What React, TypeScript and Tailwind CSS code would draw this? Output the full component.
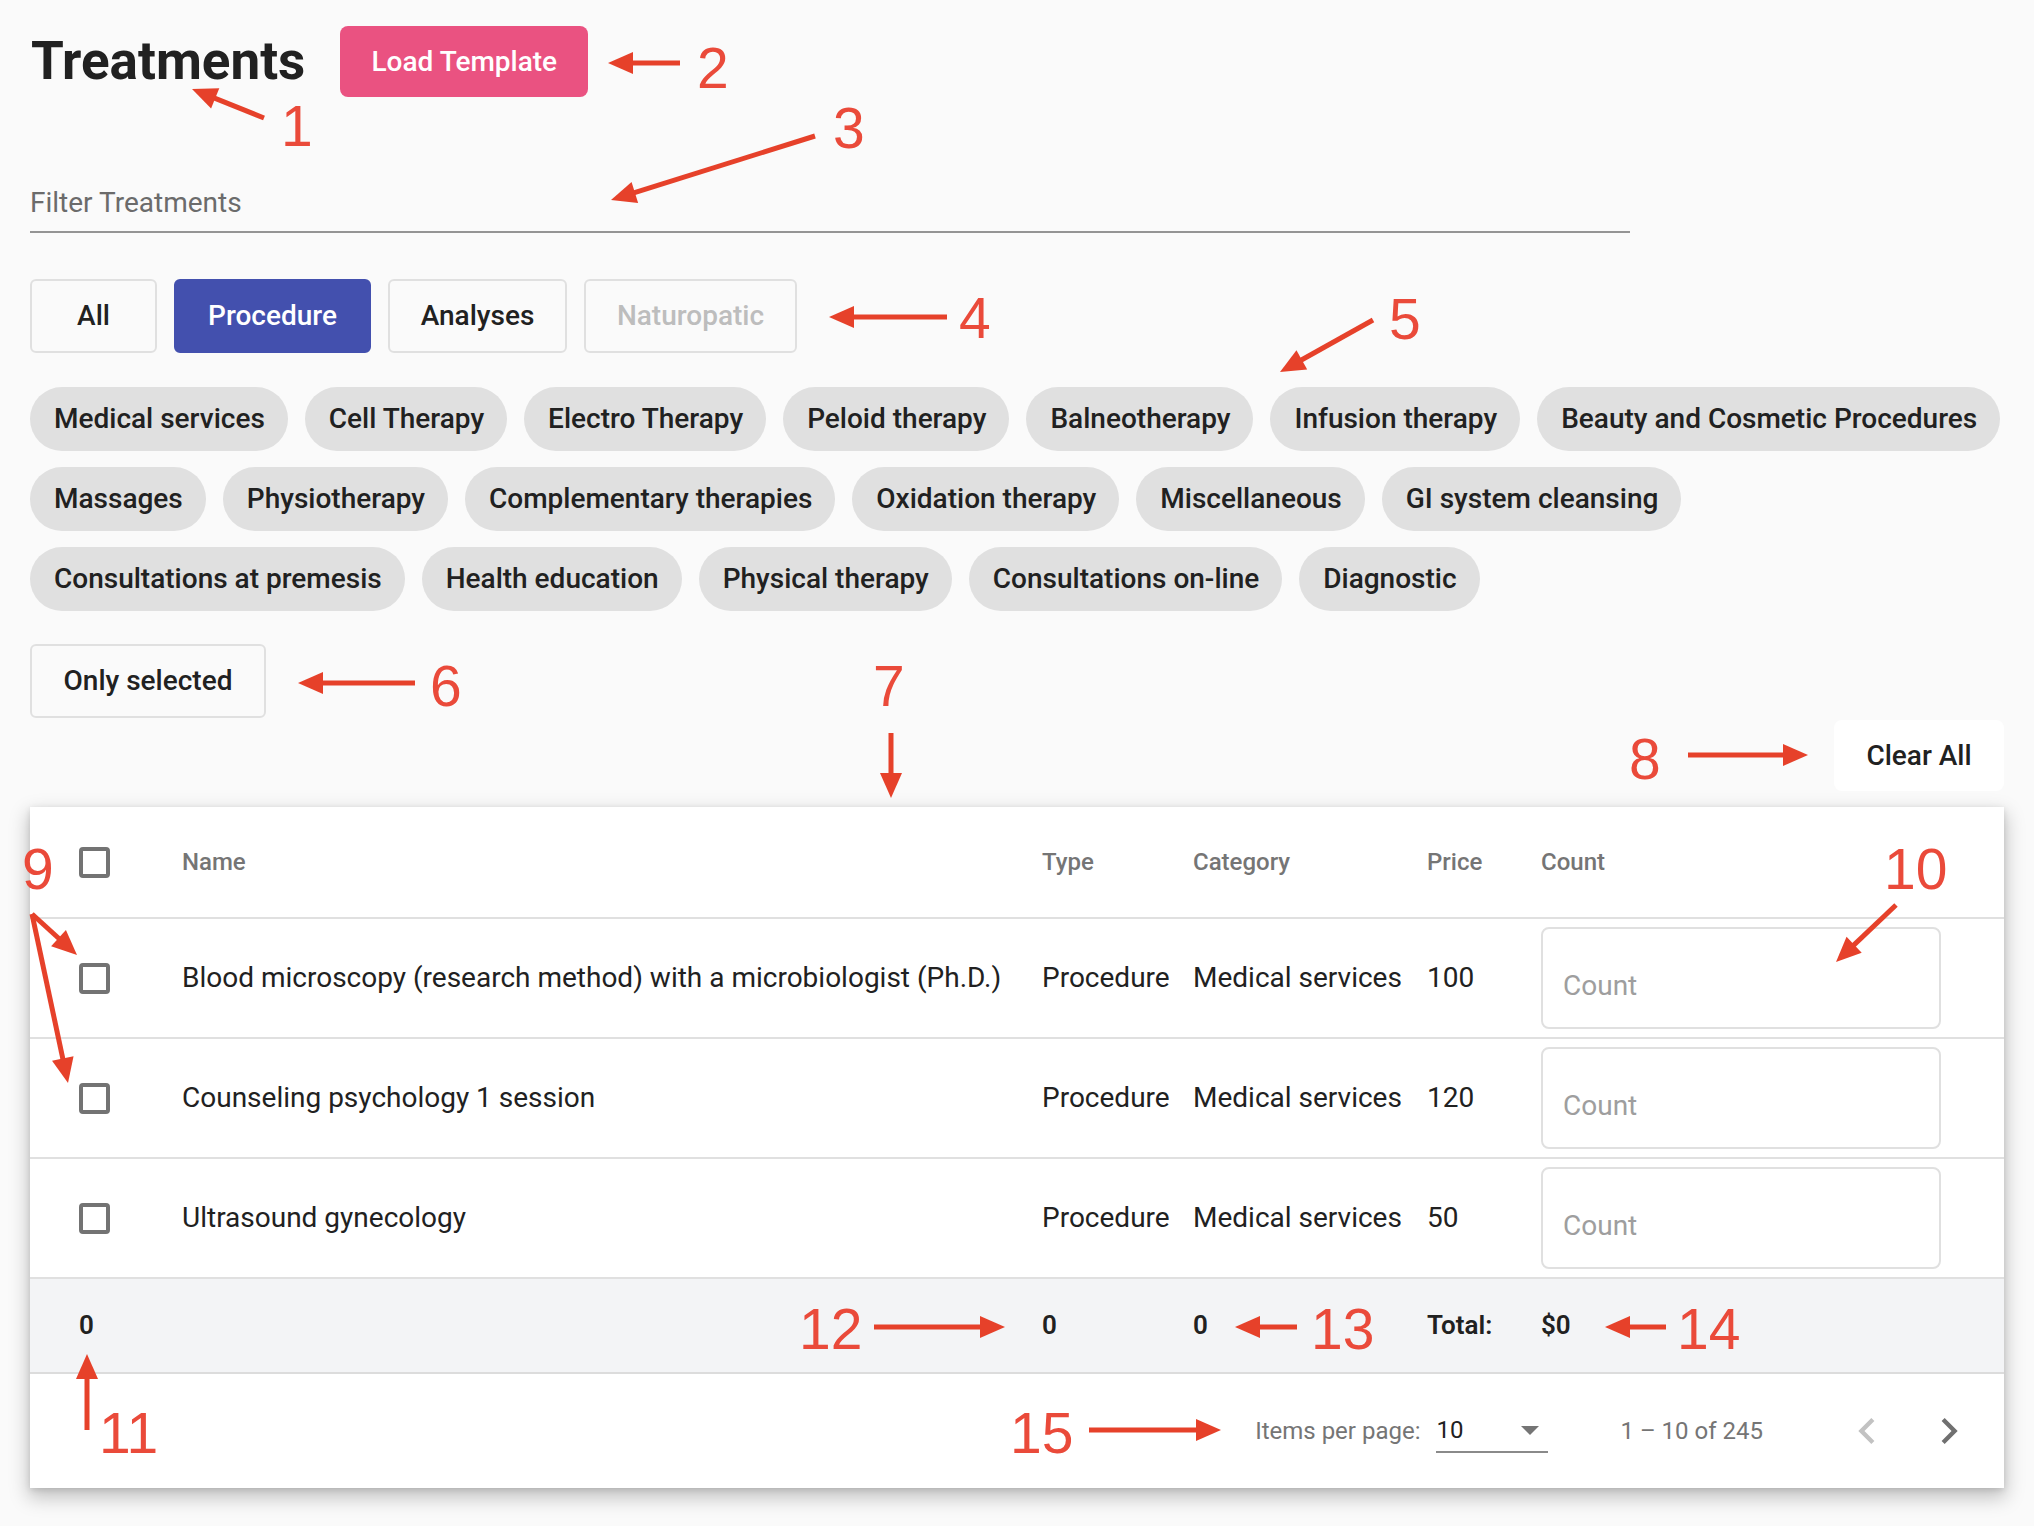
import { useState } from 'react';

const toggles = [
  { label: 'All', w: 'w-[127px]', active: false, disabled: false },
  { label: 'Procedure', w: 'w-[197px]', active: true, disabled: false },
  { label: 'Analyses', w: 'w-[179px]', active: false, disabled: false },
  { label: 'Naturopatic', w: 'w-[213px]', active: false, disabled: true },
];

const chipRows = [
  ['Medical services', 'Cell Therapy', 'Electro Therapy', 'Peloid therapy', 'Balneotherapy', 'Infusion therapy', 'Beauty and Cosmetic Procedures'],
  ['Massages', 'Physiotherapy', 'Complementary therapies', 'Oxidation therapy', 'Miscellaneous', 'GI system cleansing'],
  ['Consultations at premesis', 'Health education', 'Physical therapy', 'Consultations on-line', 'Diagnostic'],
];

const rows = [
  { name: 'Blood microscopy (research method) with a microbiologist (Ph.D.)', type: 'Procedure', category: 'Medical services', price: 100 },
  { name: 'Counseling psychology 1 session', type: 'Procedure', category: 'Medical services', price: 120 },
  { name: 'Ultrasound gynecology', type: 'Procedure', category: 'Medical services', price: 50 },
];

// annotation arrows: start -> tip
const arrows = [
  [264, 118, 192, 89],
  [680, 63, 608, 63],
  [815, 136, 611, 200],
  [947, 317, 829, 317],
  [1373, 320, 1280, 372],
  [415, 683, 298, 683],
  [891, 733, 891, 798],
  [1688, 755, 1808, 755],
  [32, 914, 77, 955],
  [32, 914, 68, 1083],
  [1896, 905, 1836, 962],
  [87, 1430, 87, 1354],
  [874, 1327, 1005, 1327],
  [1297, 1327, 1235, 1327],
  [1666, 1327, 1605, 1327],
  [1089, 1430, 1221, 1430],
];

const labels: [string, number, number][] = [
  ['1', 281, 146],
  ['2', 697, 88],
  ['3', 833, 148],
  ['4', 959, 338],
  ['5', 1389, 339],
  ['6', 430, 706],
  ['7', 873, 706],
  ['8', 1629, 779],
  ['9', 22, 889],
  ['10', 1884, 889],
  ['11', 99, 1453],
  ['12', 799, 1349],
  ['13', 1311, 1349],
  ['14', 1677, 1349],
  ['15', 1010, 1453],
];

function Arrow({ a }: { a: number[] }) {
  const [x1, y1, x2, y2] = a;
  const len = Math.hypot(x2 - x1, y2 - y1);
  const ux = (x2 - x1) / len;
  const uy = (y2 - y1) / len;
  const bx = x2 - ux * 25;
  const by = y2 - uy * 25;
  const px = -uy * 11;
  const py = ux * 11;
  return (
    <g>
      <line x1={x1} y1={y1} x2={bx + ux * 2} y2={by + uy * 2} stroke="#e6412a" strokeWidth={5} />
      <polygon points={`${x2},${y2} ${bx + px},${by + py} ${bx - px},${by - py}`} fill="#e6412a" />
    </g>
  );
}

function Annotations() {
  return (
    <svg className="absolute top-0 left-0 pointer-events-none" width={2034} height={1526} viewBox="0 0 2034 1526">
      {arrows.map((a, i) => (
        <Arrow key={i} a={a} />
      ))}
      {labels.map(([t, x, y]) => (
        <text key={t} x={x} y={y} fill="#ea4a3a" fontSize={57} fontFamily="'Liberation Sans', Arial, sans-serif">
          {t}
        </text>
      ))}
    </svg>
  );
}

function Checkbox() {
  return <div className="w-[31px] h-[31px] border-[4px] border-[#737373] rounded-[4px]" />;
}

export default function App() {
  const [counts, setCounts] = useState<string[]>(['', '', '']);

  return (
    <div className="relative min-h-screen bg-[#fafafa] font-['Roboto',sans-serif] text-[#212121]">
      <div className="px-[30px] pt-[26px] pb-[39px]">
        <div className="flex items-center h-[71px] gap-[35px]">
          <h1 className="text-[53px] leading-none font-bold pl-px whitespace-nowrap">Treatments</h1>
          <button className="w-[248px] h-[71px] rounded-[8px] bg-[#ea5281] text-white text-[28px] font-medium whitespace-nowrap">
            Load Template
          </button>
        </div>

        <div className="mt-[91px] w-[1600px]">
          <div className="text-[28px] leading-[30px] text-[#6b6b6b]">Filter Treatments</div>
          <div className="mt-[13px] h-[2px] bg-[#949494]" />
        </div>

        <div className="mt-[46px] flex gap-[17px]">
          {toggles.map((t) => (
            <button
              key={t.label}
              className={`${t.w} h-[74px] rounded-[6px] border-2 text-[28px] font-medium ${
                t.active
                  ? 'bg-[#4350ae] border-[#4350ae] text-white'
                  : t.disabled
                  ? 'border-[#e0e0e0] text-[#bdbdbd]'
                  : 'border-[#e0e0e0] text-[#212121]'
              }`}
            >
              {t.label}
            </button>
          ))}
        </div>

        <div className="mt-[34px] flex flex-col gap-[16px]">
          {chipRows.map((row, i) => (
            <div key={i} className="flex gap-[17px]">
              {row.map((c) => (
                <span
                  key={c}
                  className="h-[64px] shrink-0 whitespace-nowrap flex items-center pl-[24px] pr-[23px] rounded-full bg-[#e0e0e0] text-[28px] font-medium text-[#212121]"
                >
                  {c}
                </span>
              ))}
            </div>
          ))}
        </div>

        <button className="mt-[33px] w-[236px] h-[74px] rounded-[6px] border-2 border-[#e0e0e0] text-[28px] font-medium">
          Only selected
        </button>

        <div className="flex justify-end mt-[2px]">
          <button className="w-[170px] h-[71px] rounded-[8px] bg-white text-[28px] font-medium">Clear All</button>
        </div>

        <div className="mt-[16px] bg-white shadow-[0_8px_18px_2px_rgba(0,0,0,0.22),0_2px_6px_rgba(0,0,0,0.12)]">
          <div className="grid grid-cols-[152px_860px_151px_234px_114px_1fr] items-center h-[112px] border-b-2 border-[#e0e0e0] text-[24px] font-medium text-[#757575]">
            <div className="pl-[49px]">
              <Checkbox />
            </div>
            <div>Name</div>
            <div>Type</div>
            <div>Category</div>
            <div>Price</div>
            <div>Count</div>
          </div>

          {rows.map((r, i) => (
            <div key={r.name} className="grid grid-cols-[152px_860px_151px_234px_114px_1fr] items-center h-[120px] border-b-2 border-[#e0e0e0] text-[28px]">
              <div className="pl-[49px]">
                <Checkbox />
              </div>
              <div>{r.name}</div>
              <div>{r.type}</div>
              <div>{r.category}</div>
              <div>{r.price}</div>
              <div>
                <input
                  value={counts[i]}
                  onChange={(e) => setCounts(counts.map((c, j) => (j === i ? e.target.value : c)))}
                  placeholder="Count"
                  className="w-[400px] h-[102px] border-2 border-[#e0e0e0] rounded-[8px] pl-[20px] pt-[14px] text-[28px] outline-none placeholder:text-[#9e9e9e]"
                />
              </div>
            </div>
          ))}

          <div className="grid grid-cols-[152px_860px_151px_234px_114px_1fr] items-center h-[95px] bg-[#f3f4f6] border-b-2 border-[#dcdcdc] text-[26px] font-semibold">
            <div className="pl-[49px]">0</div>
            <div />
            <div>0</div>
            <div>0</div>
            <div>Total:</div>
            <div>$0</div>
          </div>

          <div className="flex items-center justify-end h-[114px] pr-[15px] text-[24px] text-[#757575]">
            <span>Items per page:</span>
            <div className="ml-[16px] w-[112px] h-[44px] flex items-center justify-between border-b-2 border-[#8a8a8a] pr-[9px]">
              <span className="text-[#212121]">10</span>
              <svg width="18" height="9" viewBox="0 0 18 9">
                <polygon points="0,0 18,0 9,9" fill="#757575" />
              </svg>
            </div>
            <span className="ml-[72px]">1 – 10 of 245</span>
            <button className="ml-[64px] w-[80px] h-[80px] flex items-center justify-center">
              <svg width="52" height="52" viewBox="0 0 24 24">
                <path d="M15.41 7.41L14 6l-6 6 6 6 1.41-1.41L10.83 12z" fill="#c2c2c2" />
              </svg>
            </button>
            <button className="ml-[2px] w-[80px] h-[80px] flex items-center justify-center">
              <svg width="52" height="52" viewBox="0 0 24 24">
                <path d="M10 6L8.59 7.41 13.17 12l-4.58 4.59L10 18l6-6z" fill="#707070" />
              </svg>
            </button>
          </div>
        </div>
      </div>
      <Annotations />
    </div>
  );
}
